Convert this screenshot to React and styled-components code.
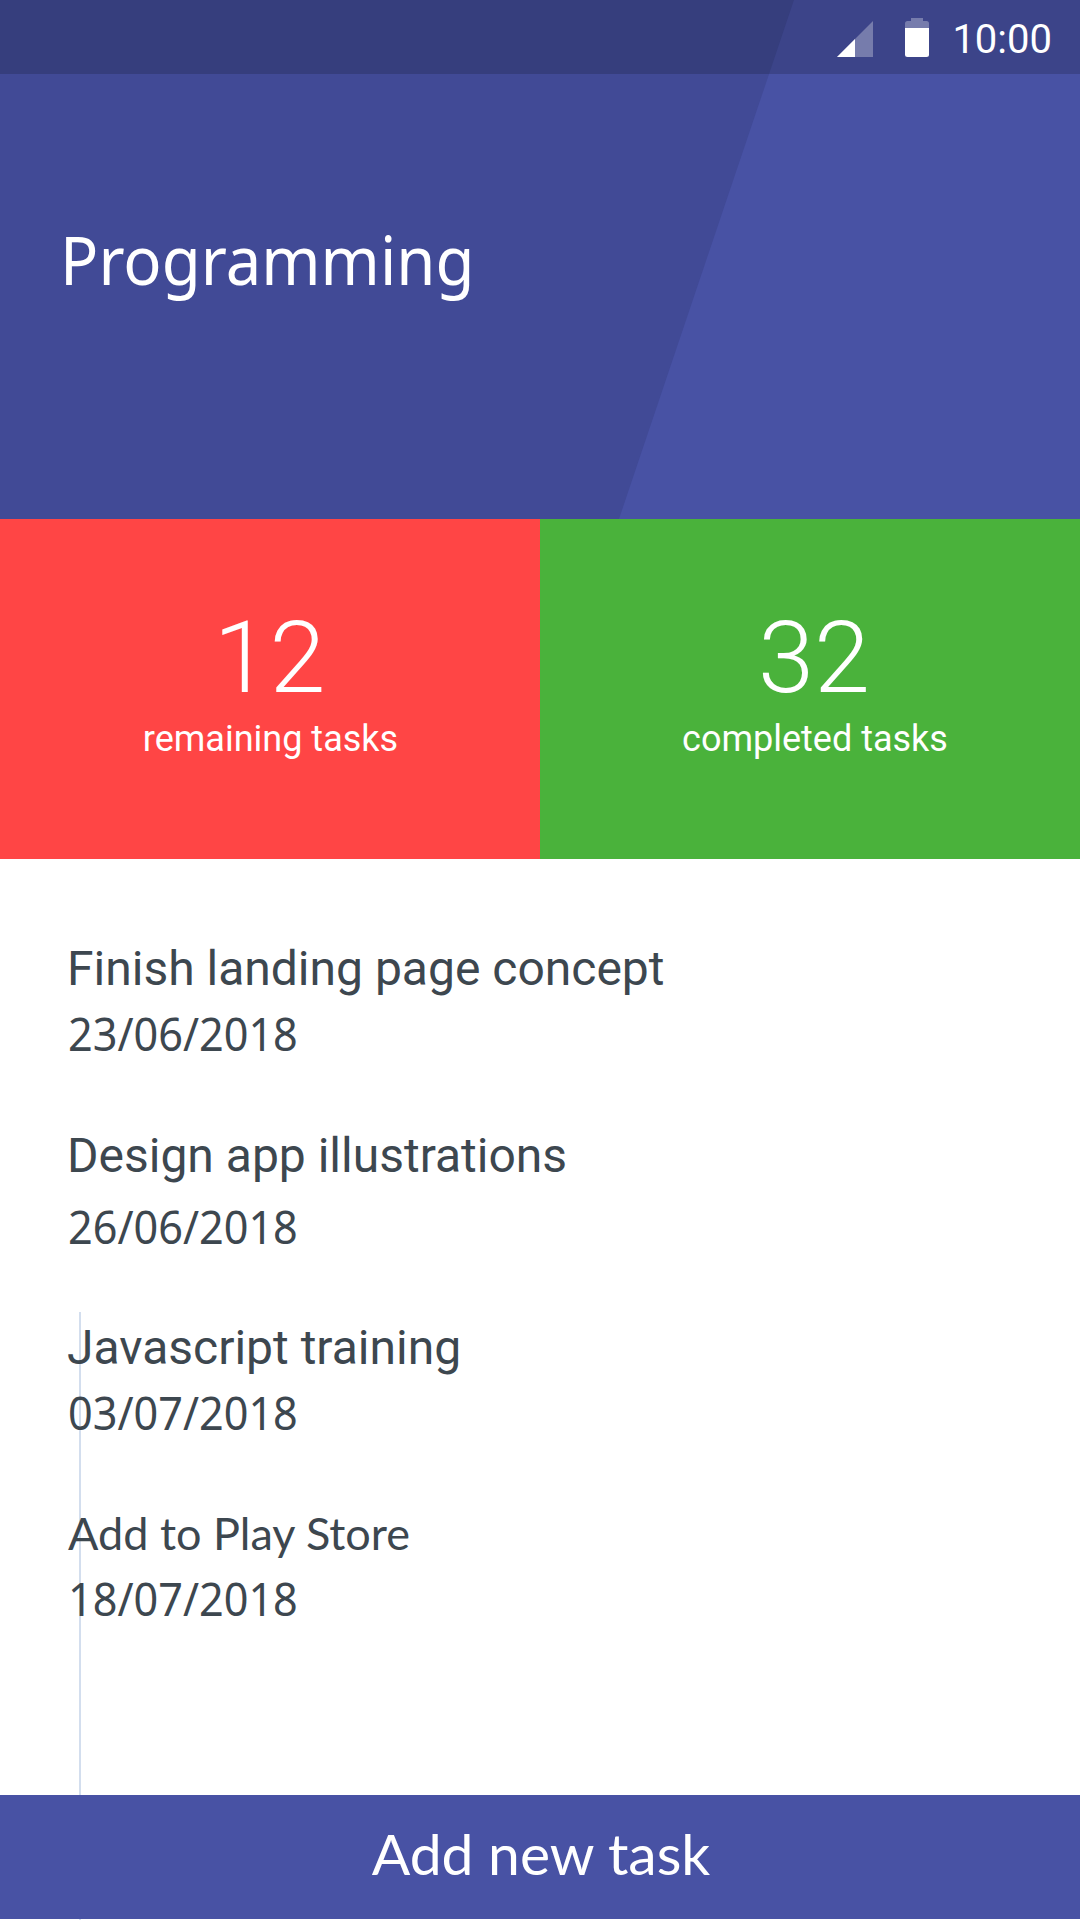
import React from "react";
import styled, { createGlobalStyle } from "styled-components";

const GlobalStyle = createGlobalStyle`
  *, *::before, *::after { box-sizing: border-box; }
  body { margin: 0; background: #fff; }
`;

const Screen = styled.div`
  position: relative;
  display: flex;
  flex-direction: column;
  width: 1080px;
  height: 1920px;
  padding-bottom: 1px;
  overflow: hidden;
  background: #fff;
  color: #3d474f;
  font-family: Roboto, sans-serif;
`;

const Header = styled.header`
  position: relative;
  display: flex;
  flex-direction: column;
  flex: none;
  height: 519px;
  background: #4852a4;
  color: #fff;

  &::before {
    content: "";
    position: absolute;
    inset: 0;
    background: #414a96;
    clip-path: polygon(0 0, 794px 0, 619px 100%, 0 100%);
  }
`;

const StatusBar = styled.div`
  position: relative;
  display: flex;
  justify-content: flex-end;
  align-items: flex-start;
  gap: 23px;
  height: 74px;
  padding: 16px 28px 0 0;
  background: rgba(0, 0, 0, 0.16);
`;

const StatusIcons = styled.div`
  display: flex;
  align-items: flex-end;
  gap: 32px;
  height: 41px;

  svg {
    display: block;
  }
`;

const Clock = styled.time`
  font-size: 40px;
  line-height: 47px;
`;

const ListTitle = styled.h1`
  position: relative;
  align-self: flex-start;
  margin: 138px 0 0 60px;
  font: 400 68px/93px "Noto Sans", sans-serif;
  transform: scaleX(0.933);
  transform-origin: left;
`;

const Stats = styled.section`
  display: grid;
  grid-template-columns: 1fr 1fr;
  flex: none;
  height: 340px;
  color: #fff;
`;

const Stat = styled.div`
  display: flex;
  flex-direction: column;
  align-items: center;
  gap: 1px;
  padding-top: 79px;
  padding-left: ${(p) => p.$shift}px;
  background: ${(p) => p.$color};
`;

const StatValue = styled.strong`
  margin-right: 2px;
  font-size: 101px;
  font-weight: 300;
  line-height: 119px;
`;

const StatLabel = styled.span`
  font-size: 36px;
  line-height: 42px;
`;

const TaskList = styled.ul`
  display: flex;
  flex-direction: column;
  flex: 1;
  margin: 0;
  padding: 81px 67px 0;
  list-style: none;
  isolation: isolate;
`;

const Timeline = styled.div`
  position: absolute;
  left: 79px;
  top: 1312px;
  bottom: 0;
  width: 2px;
  background: #d3deee;
`;

const Task = styled.li`
  display: flex;
  flex-direction: column;
  align-items: flex-start;
  gap: ${(p) => p.$gap}px;
  margin-bottom: ${(p) => p.$after}px;
`;

const TaskName = styled.span`
  font-size: 48px;
  line-height: 57px;
  white-space: nowrap;
`;

const TaskNameAlt = styled.span`
  margin-left: 1px;
  font: 400 45px/54px Lato, sans-serif;
  white-space: nowrap;
`;

const TaskDate = styled.time`
  margin-left: 1px;
  font: 400 45px/61px "Noto Sans", sans-serif;
  transform: scaleX(0.96);
  transform-origin: left;
`;

const AddButton = styled.button`
  position: relative;
  display: flex;
  justify-content: center;
  flex: none;
  height: 124px;
  padding: 24px 0 0 2px;
  border: 0;
  background: #4852a4;
  color: #fff;
  font: 400 57px/68px Lato, sans-serif;
`;

const tasks = [
  { name: "Finish landing page concept", date: "23/06/2018", gap: 6, after: 63 },
  { name: "Design app illustrations", date: "26/06/2018", gap: 12, after: 62 },
  { name: "Javascript training", date: "03/07/2018", gap: 6, after: 63 },
  { name: "Add to Play Store", date: "18/07/2018", gap: 8, after: 0, alt: true },
];

function SignalIcon() {
  return (
    <svg width="36" height="36" viewBox="0 0 36 36" fill="#fff">
      <path d="M36 0V36H0Z" opacity="0.3" />
      <path d="M18 18V36H0Z" />
    </svg>
  );
}

function BatteryIcon() {
  return (
    <svg width="24" height="39" viewBox="0 0 24 39" fill="#fff">
      <path d="M6 0H18V3H21.5A2.5 2.5 0 0 1 24 5.5V10H0V5.5A2.5 2.5 0 0 1 2.5 3H6Z" opacity="0.3" />
      <path d="M0 10H24V36.5A2.5 2.5 0 0 1 21.5 39H2.5A2.5 2.5 0 0 1 0 36.5Z" />
    </svg>
  );
}

export default function App() {
  return (
    <>
      <GlobalStyle />
      <Screen>
        <Timeline />
        <Header>
          <StatusBar>
            <StatusIcons>
              <SignalIcon />
              <BatteryIcon />
            </StatusIcons>
            <Clock>10:00</Clock>
          </StatusBar>
          <ListTitle>Programming</ListTitle>
        </Header>
        <Stats>
          <Stat $color="#ff4545" $shift={1}>
            <StatValue>12</StatValue>
            <StatLabel>remaining tasks</StatLabel>
          </Stat>
          <Stat $color="#4ab23b" $shift={10}>
            <StatValue>32</StatValue>
            <StatLabel>completed tasks</StatLabel>
          </Stat>
        </Stats>
        <TaskList>
          {tasks.map((t) => (
            <Task key={t.date} $gap={t.gap} $after={t.after}>
              {t.alt ? <TaskNameAlt>{t.name}</TaskNameAlt> : <TaskName>{t.name}</TaskName>}
              <TaskDate>{t.date}</TaskDate>
            </Task>
          ))}
        </TaskList>
        <AddButton>Add new task</AddButton>
      </Screen>
    </>
  );
}
